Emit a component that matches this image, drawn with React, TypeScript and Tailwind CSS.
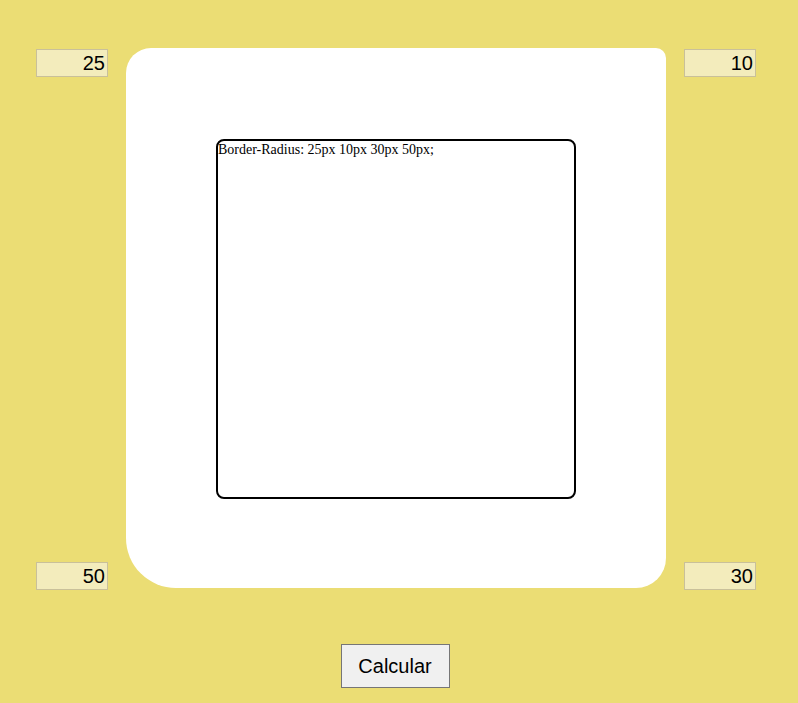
import { useState } from "react";

function Corner({ value, onChange }: { value: string; onChange: (v: string) => void }) {
  return (
    <input
      value={value}
      onChange={(e) => onChange(e.target.value)}
      className="w-[72px] h-[28px] bg-[#f3ecbc] border border-[#c9c09a] text-right pr-[2px] text-[20px] text-black font-['Liberation_Sans',Arial,sans-serif] outline-none"
    />
  );
}

export default function App() {
  const [tl, setTl] = useState("25");
  const [tr, setTr] = useState("10");
  const [br, setBr] = useState("30");
  const [bl, setBl] = useState("50");

  return (
    <div className="min-h-[703px] w-full bg-[#ebdd74] pt-[48px] pl-[36px]">
      <div className="flex gap-[18px]">
        {/* left inputs */}
        <div className="flex flex-col justify-between py-[1px] h-[543px]">
          <Corner value={tl} onChange={setTl} />
          <Corner value={bl} onChange={setBl} />
        </div>

        <div className="flex flex-col items-center">
          {/* preview */}
          <div className="w-[540px] h-[540px] bg-white rounded-tl-[25px] rounded-tr-[10px] rounded-br-[30px] rounded-bl-[50px] pt-[91px] pl-[90px]">
            <div className="w-[360px] h-[360px] border-2 border-black rounded-[8px] pt-[1px] font-['Liberation_Serif','Times_New_Roman',serif] text-[14px] leading-[15px] text-black">
              Border-Radius: {tl}px {tr}px {br}px {bl}px;
            </div>
          </div>

          <button className="mt-[56px] -ml-[2px] w-[109px] h-[44px] bg-[#f0f0f0] border border-[#767676] text-[20px] text-black font-['Liberation_Sans',Arial,sans-serif]">
            Calcular
          </button>
        </div>

        {/* right inputs */}
        <div className="flex flex-col justify-between py-[1px] h-[543px]">
          <Corner value={tr} onChange={setTr} />
          <Corner value={br} onChange={setBr} />
        </div>
      </div>
    </div>
  );
}
